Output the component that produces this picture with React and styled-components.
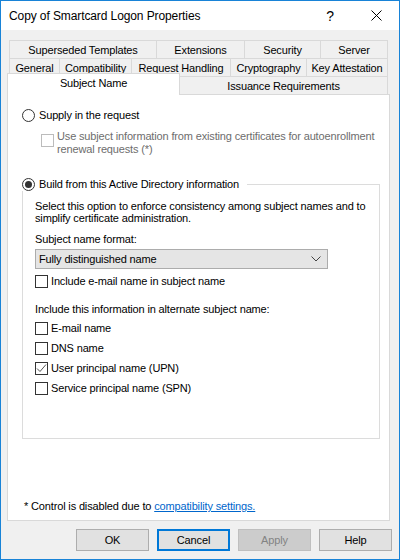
import styled, { createGlobalStyle } from 'styled-components';

const Global = createGlobalStyle`
  html, body {
    margin: 0;
    padding: 0;
    background: #ffffff;
  }
  * {
    box-sizing: border-box;
  }
`;

const Window = styled.div`
  width: 400px;
  height: 560px;
  border: 1px solid #1883d7;
  display: flex;
  flex-direction: column;
  font-family: "Liberation Sans", Arial, sans-serif;
  font-size: 11px;
  letter-spacing: -0.15px;
  color: #000;
  background: #f0f0f0;
  white-space: nowrap;
`;

const TitleBar = styled.div`
  height: 29px;
  background: #ffffff;
  display: flex;
  align-items: center;
  padding-left: 8px;
  font-size: 12px;
  letter-spacing: -0.1px;
`;

const Title = styled.div`
  flex: 1;
`;

const TitleButton = styled.div`
  width: 46px;
  height: 29px;
  display: flex;
  align-items: center;
  justify-content: center;
  font-size: 14px;
`;

const Body = styled.div`
  flex: 1;
  display: flex;
  flex-direction: column;
  padding: 10px 9px 0 6px;
`;

const TabRow = styled.div`
  display: flex;
  align-items: flex-end;
  height: 18px;
  margin: 0 2px 0 2px;
`;

const Tab = styled.div`
  width: ${(p) => p.$w}px;
  height: 18px;
  border: 1px solid #d9d9d9;
  border-bottom: none;
  margin-left: -1px;
  &:first-child {
    margin-left: 0;
  }
  display: flex;
  align-items: center;
  justify-content: center;
  background: #f0f0f0;
`;

const ActiveTab = styled(Tab)`
  height: 22px;
  margin-left: -2px;
  margin-bottom: -1px;
  background: #ffffff;
  position: relative;
  z-index: 1;
  padding-bottom: 3px;
  &:first-child {
    margin-left: -2px;
  }
`;

const Panel = styled.div`
  height: 427px;
  background: #ffffff;
  border: 1px solid #d9d9d9;
  display: flex;
  flex-direction: column;
  padding: 14px 10px 0 14px;
`;

const Line = styled.div`
  display: flex;
  align-items: ${(p) => (p.$top ? 'flex-start' : 'center')};
  line-height: 13px;
  margin-top: ${(p) => p.$mt || 0}px;
  margin-left: ${(p) => p.$ml || 0}px;
  color: ${(p) => (p.$disabled ? '#6d6d6d' : '#000')};
`;

const Radio = styled.span`
  width: 13px;
  height: 13px;
  border-radius: 50%;
  border: 1px solid #333333;
  background: #ffffff;
  display: inline-flex;
  align-items: center;
  justify-content: center;
  flex-shrink: 0;
  margin-right: 4px;
  &::after {
    content: '';
    width: 7px;
    height: 7px;
    border-radius: 50%;
    background: ${(p) => (p.$checked ? '#333333' : 'transparent')};
  }
`;

const Box = styled.span`
  width: 13px;
  height: 13px;
  border: 1px solid ${(p) => (p.$disabled ? '#bcbcbc' : '#333333')};
  background: #ffffff;
  flex-shrink: 0;
  margin-right: 3px;
  margin-top: ${(p) => p.$mt || 0}px;
  display: inline-flex;
  align-items: center;
  justify-content: center;
`;

const Group = styled.fieldset`
  margin: 22px 0 0 0;
  padding: 0 0 0 12px;
  border: 1px solid #dcdcdc;
  height: 261px;
  min-width: 0;
  width: 358px;
`;

const Legend = styled.legend`
  padding: 0 8px 0 0;
  margin-left: -13px;
  display: flex;
  align-items: center;
  line-height: 13px;
`;

const Para = styled.div`
  line-height: 12px;
  margin-top: ${(p) => p.$mt || 0}px;
`;

const Select = styled.div`
  width: 293px;
  height: 20px;
  margin-top: 4px;
  background: #e5e5e5;
  border: 1px solid #acacac;
  display: flex;
  align-items: center;
  justify-content: space-between;
  padding: 0 6px 0 3px;
`;

const Footer = styled.div`
  margin-top: auto;
  margin-bottom: 7px;
  margin-left: 2px;
  line-height: 13px;
`;

const Link = styled.span`
  color: #0066cc;
  text-decoration: underline;
`;

const Buttons = styled.div`
  display: flex;
  justify-content: flex-end;
  gap: 8px;
  padding-top: 8px;
  margin-right: -2px;
`;

const Button = styled.div`
  width: 73px;
  height: 22px;
  display: flex;
  align-items: center;
  justify-content: center;
  background: ${(p) => (p.$disabled ? '#cccccc' : '#e1e1e1')};
  border: ${(p) => (p.$default ? '2px solid #0078d7' : p.$disabled ? '1px solid #bfbfbf' : '1px solid #adadad')};
  color: ${(p) => (p.$disabled ? '#838383' : '#000')};
`;

const Check = () => (
  <svg width="11" height="11" viewBox="0 0 11 11">
    <polyline points="1,5.5 4,8.5 10,1.5" fill="none" stroke="#555" strokeWidth="1" />
  </svg>
);

const Chevron = () => (
  <svg width="10" height="6" viewBox="0 0 10 6">
    <polyline points="0.5,0.5 5,5 9.5,0.5" fill="none" stroke="#444" strokeWidth="1" />
  </svg>
);

const Close = () => (
  <svg width="11" height="11" viewBox="0 0 11 11">
    <path d="M0.5 0.5 L10.5 10.5 M10.5 0.5 L0.5 10.5" stroke="#000" strokeWidth="1" />
  </svg>
);

const checks = [
  { label: 'E-mail name', checked: false },
  { label: 'DNS name', checked: false },
  { label: 'User principal name (UPN)', checked: true },
  { label: 'Service principal name (SPN)', checked: false },
];

export default function App() {
  return (
    <>
      <Global />
      <Window>
        <TitleBar>
          <Title>Copy of Smartcard Logon Properties</Title>
          <TitleButton>?</TitleButton>
          <TitleButton>
            <Close />
          </TitleButton>
        </TitleBar>
        <Body>
          <TabRow>
            <Tab $w={148}>Superseded Templates</Tab>
            <Tab $w={89}>Extensions</Tab>
            <Tab $w={77}>Security</Tab>
            <Tab $w={68}>Server</Tab>
          </TabRow>
          <TabRow>
            <Tab $w={51}>General</Tab>
            <Tab $w={73}>Compatibility</Tab>
            <Tab $w={100}>Request Handling</Tab>
            <Tab $w={77}>Cryptography</Tab>
            <Tab $w={82}>Key Attestation</Tab>
          </TabRow>
          <TabRow>
            <ActiveTab $w={174}>Subject Name</ActiveTab>
            <Tab $w={210}>Issuance Requirements</Tab>
          </TabRow>
          <Panel>
            <Line>
              <Radio />
              Supply in the request
            </Line>
            <Line $top $disabled $mt={8} $ml={19}>
              <Box $disabled $mt={4} />
              <span>
                Use subject information from existing certificates for autoenrollment
                <br />
                renewal requests (*)
              </span>
            </Line>
            <Group>
              <Legend>
                <Radio $checked />
                Build from this Active Directory information
              </Legend>
              <Para $mt={9}>
                Select this option to enforce consistency among subject names and to
                <br />
                simplify certificate administration.
              </Para>
              <Para $mt={9}>Subject name format:</Para>
              <Select>
                <span>Fully distinguished name</span>
                <Chevron />
              </Select>
              <Line $mt={6}>
                <Box />
                Include e-mail name in subject name
              </Line>
              <Para $mt={15}>Include this information in alternate subject name:</Para>
              {checks.map((c, i) => (
                <Line key={c.label} $mt={i === 0 ? 7 : 7}>
                  <Box>{c.checked && <Check />}</Box>
                  {c.label}
                </Line>
              ))}
            </Group>
            <Footer>
              * Control is disabled due to <Link>compatibility settings.</Link>
            </Footer>
          </Panel>
          <Buttons>
            <Button>OK</Button>
            <Button $default>Cancel</Button>
            <Button $disabled>Apply</Button>
            <Button>Help</Button>
          </Buttons>
        </Body>
      </Window>
    </>
  );
}
